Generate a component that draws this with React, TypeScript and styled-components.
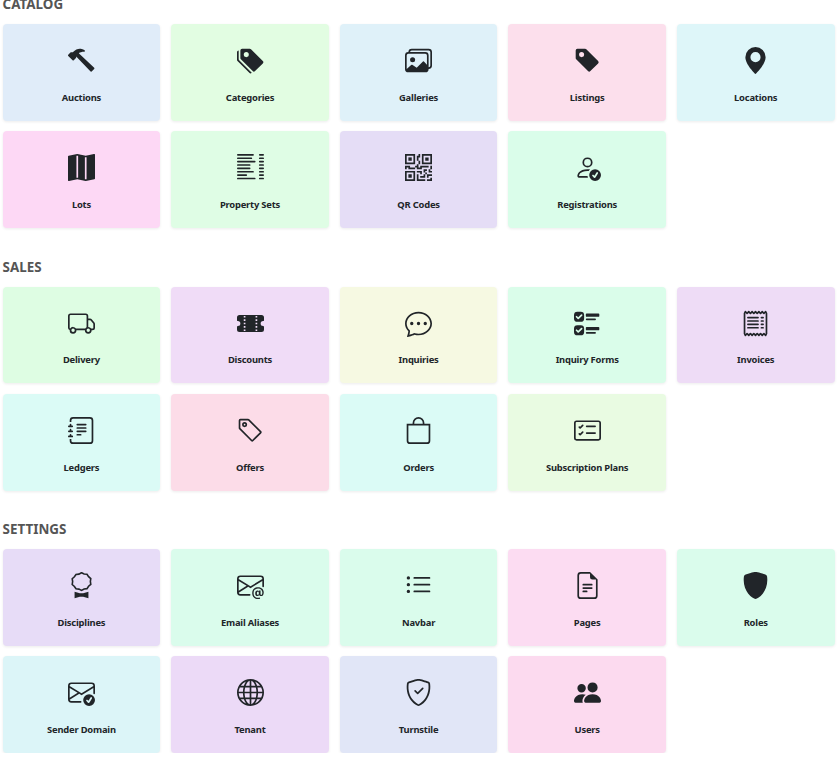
import React from "react";
import styled, { createGlobalStyle } from "styled-components";
import {
  BsBag,
  BsCardChecklist,
  BsChatDots,
  BsEnvelopeAt,
  BsEnvelopeCheck,
  BsFileEarmarkText,
  BsGeoAltFill,
  BsGlobe,
  BsHammer,
  BsImages,
  BsJournalText,
  BsListColumns,
  BsListUl,
  BsMapFill,
  BsPeopleFill,
  BsPersonCheck,
  BsQrCode,
  BsReceipt,
  BsShieldCheck,
  BsShieldFill,
  BsTag,
  BsTagFill,
  BsTagsFill,
  BsTicketPerforatedFill,
  BsTruck,
  BsUiChecks,
} from "react-icons/bs";

const DisciplineIcon = () => (
  <svg width="1em" height="1em" viewBox="0 0 16 16" fill="currentColor">
    <path
      fill="none"
      stroke="currentColor"
      strokeWidth="0.95"
      d="M8 .4l1.55.75 1.7.2.95 1.4 1.3 1.15-.25 1.7.25 1.7-1.3 1.15-.95 1.4-1.7.2L8 10.900l-1.55-.75-1.700-.2-.95-1.400-1.300-1.150.25-1.700-.25-1.700 1.300-1.150.95-1.400 1.700-.2z"
    />
    <path d="M3.900 11.700l3.100.95h2l3.100-.95v3.900l-3.100-.95H7l-3.100.95z" />
  </svg>
);

interface IEntry {
  label: string;
  color: string;
  icon: React.ReactNode;
}

const sections: { title: string; entries: IEntry[] }[] = [
  {
    title: "CATALOG",
    entries: [
      { label: "Auctions", color: "#e0ecf9", icon: <BsHammer /> },
      { label: "Categories", color: "#e2fde2", icon: <BsTagsFill /> },
      { label: "Galleries", color: "#dff1f9", icon: <BsImages /> },
      { label: "Listings", color: "#fcdfec", icon: <BsTagFill /> },
      { label: "Locations", color: "#def6f9", icon: <BsGeoAltFill /> },
      { label: "Lots", color: "#fdd8f5", icon: <BsMapFill /> },
      { label: "Property Sets", color: "#dffde5", icon: <BsListColumns /> },
      { label: "QR Codes", color: "#e5ddf6", icon: <BsQrCode /> },
      { label: "Registrations", color: "#dafdea", icon: <BsPersonCheck /> },
    ],
  },
  {
    title: "SALES",
    entries: [
      { label: "Delivery", color: "#defde3", icon: <BsTruck /> },
      { label: "Discounts", color: "#f0dcf7", icon: <BsTicketPerforatedFill /> },
      { label: "Inquiries", color: "#f6f9e2", icon: <BsChatDots /> },
      { label: "Inquiry Forms", color: "#dafdea", icon: <BsUiChecks /> },
      { label: "Invoices", color: "#eedcf6", icon: <BsReceipt /> },
      { label: "Ledgers", color: "#dbfbf6", icon: <BsJournalText /> },
      { label: "Offers", color: "#fcdce8", icon: <BsTag /> },
      { label: "Orders", color: "#dbfbf6", icon: <BsBag /> },
      { label: "Subscription Plans", color: "#e9fbe2", icon: <BsCardChecklist /> },
    ],
  },
  {
    title: "SETTINGS",
    entries: [
      { label: "Disciplines", color: "#e7dcf7", icon: <DisciplineIcon /> },
      { label: "Email Aliases", color: "#dafcec", icon: <BsEnvelopeAt /> },
      { label: "Navbar", color: "#dafcec", icon: <BsListUl /> },
      { label: "Pages", color: "#fcdcf2", icon: <BsFileEarmarkText /> },
      { label: "Roles", color: "#dafcec", icon: <BsShieldFill /> },
      { label: "Sender Domain", color: "#dcf5f8", icon: <BsEnvelopeCheck /> },
      { label: "Tenant", color: "#ecdaf7", icon: <BsGlobe /> },
      { label: "Turnstile", color: "#e1e6f7", icon: <BsShieldCheck /> },
      { label: "Users", color: "#fcdaef", icon: <BsPeopleFill /> },
    ],
  },
];

const GlobalStyle = createGlobalStyle`
  html, body {
    margin: 0;
    padding: 0;
    background: #fff;
    overflow: hidden;
  }
`;

const App = () => (
  <Page>
    <GlobalStyle />
    {sections.map((section) => (
      <Section key={section.title}>
        <SectionTitle>{section.title}</SectionTitle>
        <CardGrid>
          {section.entries.map((entry) => (
            <Card key={entry.label} $color={entry.color}>
              <CardIcon>{entry.icon}</CardIcon>
              <CardLabel>{entry.label}</CardLabel>
            </Card>
          ))}
        </CardGrid>
      </Section>
    ))}
  </Page>
);

export default App;

const Page = styled.div`
  display: flex;
  flex-direction: column;
  row-gap: 29.6px;
  width: 832px;
  margin: -5px 0 0 2.6px;
  font-family: "Noto Sans", "Open Sans", sans-serif;
`;

const Section = styled.section`
  display: flex;
  flex-direction: column;
  row-gap: 10px;
`;

const SectionTitle = styled.h2`
  margin: 0;
  height: 19px;
  font-size: 13.4px;
  line-height: 19px;
  font-weight: 700;
  color: #555;
`;

const CardGrid = styled.div`
  display: grid;
  grid-template-columns: repeat(5, 1fr);
  column-gap: 10.88px;
  row-gap: 10.4px;
`;

const Card = styled.div<{ $color: string }>`
  display: flex;
  flex-direction: column;
  align-items: center;
  height: 96.8px;
  padding-top: 23px;
  box-sizing: border-box;
  border-radius: 4px;
  background-color: ${(props) => props.$color};
  box-shadow: 0 1px 3px rgba(0, 0, 0, 0.08);
`;

const CardIcon = styled.div`
  display: flex;
  align-items: center;
  justify-content: center;
  height: 27px;
  font-size: 27px;
  color: #212529;
`;

const CardLabel = styled.div`
  margin-top: 16.8px;
  font-size: 9.4px;
  line-height: 14px;
  font-weight: 700;
  letter-spacing: -0.2px;
  color: #212529;
`;
